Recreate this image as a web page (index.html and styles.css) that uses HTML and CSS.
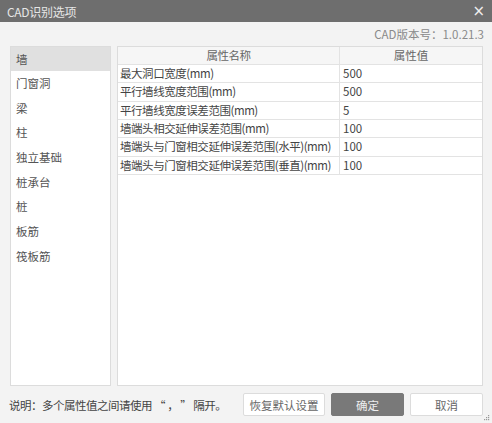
FILE: index.html
```html
<!DOCTYPE html>
<html>
<head>
<meta charset="utf-8">
<link rel="stylesheet" href="styles.css">
</head>
<body>
<div class="dialog">
  <div class="titlebar">
    <span class="title">CAD识别选项</span>
    <span class="close">×</span>
  </div>
  <div class="version">CAD版本号：1.0.21.3</div>
  <div class="panels">
    <ul class="list">
      <li class="selected">墙</li>
      <li>门窗洞</li>
      <li>梁</li>
      <li>柱</li>
      <li>独立基础</li>
      <li>桩承台</li>
      <li>桩</li>
      <li>板筋</li>
      <li>筏板筋</li>
    </ul>
    <div class="table">
      <div class="row head"><div class="c1">属性名称</div><div class="c2">属性值</div></div>
      <div class="row"><div class="c1">最大洞口宽度(mm)</div><div class="c2">500</div></div>
      <div class="row"><div class="c1">平行墙线宽度范围(mm)</div><div class="c2">500</div></div>
      <div class="row"><div class="c1">平行墙线宽度误差范围(mm)</div><div class="c2">5</div></div>
      <div class="row"><div class="c1">墙端头相交延伸误差范围(mm)</div><div class="c2">100</div></div>
      <div class="row"><div class="c1">墙端头与门窗相交延伸误差范围(水平)(mm)</div><div class="c2">100</div></div>
      <div class="row"><div class="c1">墙端头与门窗相交延伸误差范围(垂直)(mm)</div><div class="c2">100</div></div>
    </div>
  </div>
  <div class="footer">
    <span class="note">说明：多个属性值之间请使用 “ ， ” 隔开。</span>
    <div class="buttons">
      <button class="btn reset">恢复默认设置</button>
      <button class="btn ok">确定</button>
      <button class="btn cancel">取消</button>
    </div>
    <svg class="grip" width="6" height="6" viewBox="0 0 6 6"><rect x="4" y="0" width="1.2" height="1.2" fill="#999"/><rect x="2" y="2" width="1.2" height="1.2" fill="#999"/><rect x="4" y="2" width="1.2" height="1.2" fill="#999"/><rect x="0" y="4" width="1.2" height="1.2" fill="#999"/><rect x="2" y="4" width="1.2" height="1.2" fill="#999"/><rect x="4" y="4" width="1.2" height="1.2" fill="#999"/></svg>
  </div>
</div>
</body>
</html>
```

FILE: styles.css
```css
* { box-sizing: border-box; }
html, body { margin: 0; padding: 0; }
body {
  width: 492px;
  height: 423px;
  background: #f3f3f3;
  font-family: "Noto Sans CJK SC", "Noto Sans", sans-serif;
  font-size: 12px;
  color: #333;
  overflow: hidden;
}
.dialog {
  width: 492px;
  height: 423px;
  display: flex;
  flex-direction: column;
  position: relative;
}
.titlebar {
  height: 22px;
  background: #6e6e6e;
  display: flex;
  align-items: center;
  justify-content: space-between;
  padding: 0 7px 0 7px;
  color: #e6e6e6;
}
.title { font-size: 12px; letter-spacing: -0.3px; }
.close { font-size: 15px; line-height: 1; color: #f0f0f0; font-family: "DejaVu Sans", sans-serif; }
.version {
  height: 24px;
  line-height: 24px;
  text-align: right;
  padding-right: 8px;
  color: #8a8a8a;
  font-size: 11.5px;
}
.panels {
  display: flex;
  gap: 6px;
  padding: 0 9px 0 10px;
  height: 340px;
}
.list {
  list-style: none;
  margin: 0;
  padding: 0;
  width: 101px;
  background: #fff;
  border: 1px solid #dcdcdc;
}
.list li {
  height: 24.7px;
  line-height: 24.7px;
  padding-left: 5px;
  color: #555;
  font-size: 11.5px;
}
.list li.selected { background: #e0e0e0; height: 24px; line-height: 24px; }
.table {
  flex: 1;
  background: #fff;
  border: 1px solid #dcdcdc;
  font-size: 11.5px;
}
.row {
  display: flex;
  height: 18.33px;
  border-bottom: 1px solid #e3e3e3;
  line-height: 17px;
  color: #444;
}
.row.head { height: 18px; background: #f6f6f6; color: #666; }
.row.head .c1, .row.head .c2 { text-align: center; padding-left: 0; }
.c1 {
  width: 222px;
  border-right: 1px solid #e3e3e3;
  padding-left: 2px;
  white-space: nowrap;
  overflow: hidden;
  letter-spacing: -0.45px;
}
.c2 { flex: 1; padding-left: 3px; }
.footer {
  flex: 1;
  display: flex;
  align-items: center;
  justify-content: space-between;
  padding: 0 9px 0 9px;
  position: relative;
}
.note { color: #444; font-size: 11.5px; letter-spacing: -0.5px; white-space: pre; }
.buttons { display: flex; gap: 6px; }
.btn {
  height: 23px;
  font-family: "Noto Sans CJK SC", "Noto Sans", sans-serif;
  font-size: 11.5px;
  border: 1px solid #dcdcdc;
  background: #fff;
  color: #666;
  border-radius: 2px;
  padding: 0;
}
.reset { width: 82px; }
.ok { width: 73px; background: #797979; border-color: #797979; color: #eee; }
.cancel { width: 73px; }
.grip { position: absolute; right: 2px; bottom: 2px; }
```
